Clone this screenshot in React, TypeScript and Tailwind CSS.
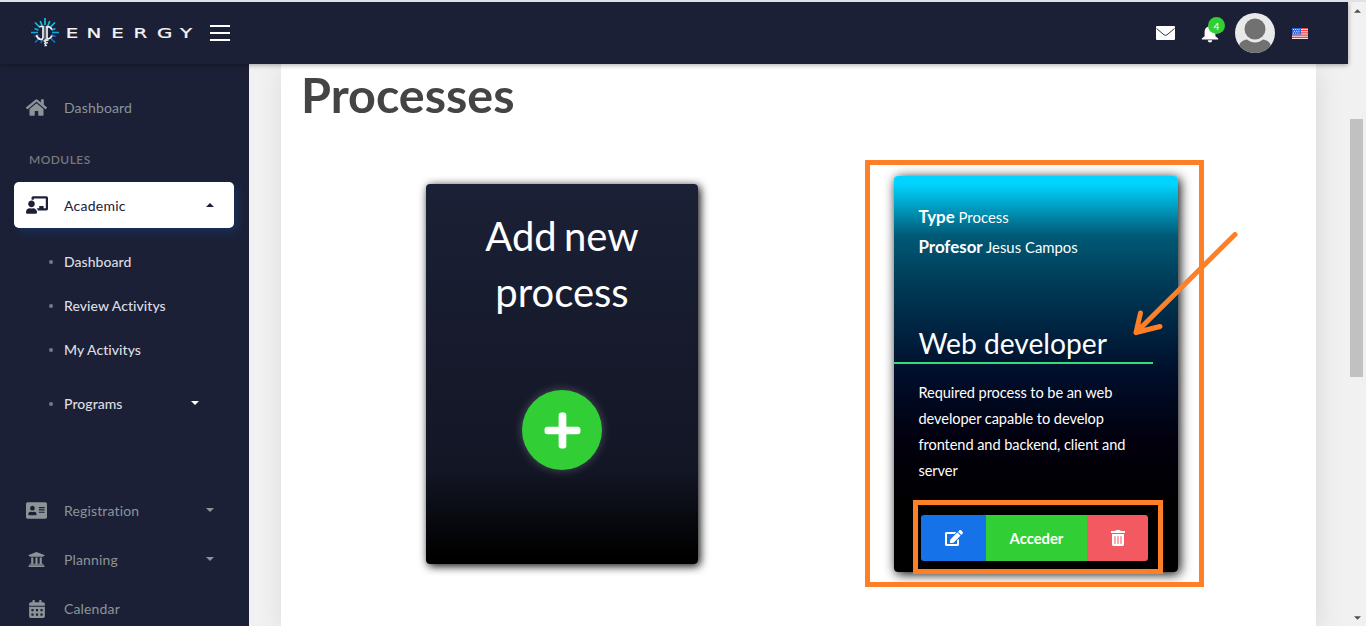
import React from "react";
import {
  FaAddressCard,
  FaCalendarAlt,
  FaChalkboardTeacher,
  FaEdit,
  FaHome,
  FaPlus,
  FaTrashAlt,
  FaUniversity,
} from "react-icons/fa";

function LogoMark() {
  return (
    <svg width="30" height="32" viewBox="0 0 30 32" fill="none">
      <g strokeWidth="1.7">
        <path d="M15 1v7M10.200 4l2 5M19.800 4l-2 5M5 5.500l5 5M25 5.500l-5 5" stroke="#12c0dc" />
        <path d="M4.500 11.500l4 1.600M25.500 11.500l-4 1.600M1 15.500h7M22 15.500h7" stroke="#14a4dc" />
        <path d="M4.500 19.500l4-1.600M25.500 19.500l-4-1.600M5 25.500l5-5M25 25.500l-5-5M11 26l1-3" stroke="#1370cf" />
      </g>
      <path d="M9.500 9.500h3.500v10.500c0 2-1 2.500-2.500 2.300-2-.3-3.500-2-4-4" stroke="#f2f2f2" strokeWidth="1.700" />
      <path d="M22 12.500c-1-2-2.500-3-5-3v12.500c2.500 0 4-1.200 5-3.500" stroke="#f2f2f2" strokeWidth="1.700" />
      <path d="M15 9v14" stroke="#8b8e9b" strokeWidth="1.200" />
      <path d="M13.500 24l5-1M14 26.500l4-.8M14.500 28.800l2.500-.5M15.500 22v7" stroke="#e6e6e6" strokeWidth="1.300" />
    </svg>
  );
}

function Header() {
  return (
    <header className="relative z-20 flex h-[62px] shrink-0 items-center bg-[#1b2036] pl-[30px] pr-[40px] shadow-[0_1px_5px_rgba(0,0,0,0.35)]">
      <LogoMark />
      <svg width="130" height="20" className="ml-1.5 overflow-visible" fill="#f4f4f4" stroke="#f4f4f4" strokeWidth="0.250" fontFamily="DejaVu Sans" fontSize="13.200">
        <text transform="scale(1.5 1)" y="15" x="-0.200 13.700 30.200 45 60.700 76">ENERGY</text>
      </svg>
      <div className="ml-[14px] flex w-5 flex-col gap-[5px]">
        <i className="h-0.5 bg-white" />
        <i className="h-0.5 bg-white" />
        <i className="h-0.5 bg-white" />
      </div>
      <div className="ml-auto flex items-center">
        <svg width="19" height="14" viewBox="0 0 19 14">
          <rect width="19" height="14" rx="1" fill="#fff" />
          <path d="M.5 2.500l7.500 6.300q1.500 1 3 0l7.500-6.300" fill="none" stroke="#1b2036" strokeWidth="0.900" />
        </svg>
        <div className="relative ml-[26px] h-[16px] w-[18px]">
          <svg width="18" height="18" viewBox="0 0 18 18" fill="#fff">
            <path d="M9 0c1 0 1.500.6 1.500 1.600 2.600.7 3.900 2.700 3.900 5.400v4.200l2.800 2.200v1H.8v-1l2.800-2.200V7c0-2.700 1.300-4.700 3.900-5.400C7.500.6 8 0 9 0zM6.800 15.300h4.400c0 1.300-.9 2.100-2.200 2.100s-2.200-.8-2.200-2.100z" />
          </svg>
          <span className="absolute left-[7px] top-[-8px] flex h-[17px] w-[17px] items-center justify-center rounded-full bg-[#31ce36] text-[10px] leading-none text-white">4</span>
        </div>
        <svg width="40" height="40" viewBox="0 0 40 40" className="ml-[16px]">
          <defs>
            <clipPath id="avatar">
              <circle cx="20" cy="20" r="20" />
            </clipPath>
          </defs>
          <g clipPath="url(#avatar)">
            <rect width="40" height="40" fill="#e9e9e9" />
            <circle cx="20" cy="16" r="10.500" fill="#717171" />
            <path d="M4 33c1-4 4-6 8-6.500 5 4 11 4 16 0 4 .5 7 2.500 8 6.500v7H4z" fill="#717171" />
          </g>
        </svg>
        <svg width="16" height="11" viewBox="0 0 16 11" className="ml-[17px]">
          <rect width="16" height="11" fill="#f8e4e4" />
          <path d="M0 .5h16M0 2.700h16M0 4.900h16M0 7.100h16M0 9.300h16" stroke="#ee3f43" strokeWidth="1.200" />
          <rect width="9" height="6.500" fill="#2d63d8" />
          <path d="M1 1.500h7M2 3.300h6M1 5.100h7" stroke="#fff" strokeWidth="1" strokeDasharray="1 1.200" />
        </svg>
      </div>
    </header>
  );
}

function Caret({ up = false, className = "" }: { up?: boolean; className?: string }) {
  return (
    <svg width="8" height="4" viewBox="0 0 8 4" fill="currentColor" className={className}>
      <path d={up ? "M0 4l4-4 4 4z" : "M0 0h8L4 4z"} />
    </svg>
  );
}

function NavItem({ icon, label, caret = false }: { icon: React.ReactNode; label: string; caret?: boolean }) {
  return (
    <div className="flex h-[49px] shrink-0 items-center text-[#8d9498]">
      <span className="ml-[26px] flex w-[21px] justify-center">{icon}</span>
      <span className="ml-[17px] text-[14px] tracking-[0.150px]">{label}</span>
      {caret && <Caret className="mb-px ml-auto mr-[35px]" />}
    </div>
  );
}

function SubItem({ label, caret = false }: { label: string; caret?: boolean }) {
  return (
    <div className="flex h-[44px] shrink-0 items-center text-[#dcdde2]">
      <i className="ml-[49px] mt-px h-1 w-1 rounded-full bg-[#777a86]" />
      <span className="ml-[11px] text-[14px] font-medium tracking-[0.050px]">{label}</span>
      {caret && <Caret className="ml-auto mr-[50px] text-white" />}
    </div>
  );
}

function Sidebar() {
  return (
    <aside className="z-10 flex w-[249px] shrink-0 flex-col overflow-hidden bg-[#1b2036] pt-[19px]">
      <NavItem icon={<FaHome size={21} />} label="Dashboard" />
      <div className="ml-[29px] mt-[20px] shrink-0 text-[12px] font-semibold leading-[16px] tracking-[0.450px] text-[#77777b]">MODULES</div>
      <div className="ml-[14px] mt-[14px] flex h-[46px] w-[220px] shrink-0 items-center rounded-[5px] bg-white text-[#1b2036] shadow-[4px_4px_10px_rgba(21,114,232,0.2)]">
        <FaChalkboardTeacher size={22} className="ml-[12px]" />
        <span className="ml-[16px] text-[14px] tracking-[0.250px]">Academic</span>
        <Caret up className="ml-auto mr-[20px]" />
      </div>
      <div className="mt-[11px] flex shrink-0 flex-col">
        <SubItem label="Dashboard" />
        <SubItem label="Review Activitys" />
        <SubItem label="My Activitys" />
      </div>
      <div className="mb-[61px] mt-[10px] shrink-0">
        <SubItem label="Programs" caret />
      </div>
      <NavItem icon={<FaAddressCard size={21} />} label="Registration" caret />
      <NavItem icon={<FaUniversity size={17} />} label="Planning" caret />
      <NavItem icon={<FaCalendarAlt size={18} />} label="Calendar" />
    </aside>
  );
}

function AddCard() {
  return (
    <section className="mt-[8px] flex h-[380px] w-[272px] shrink-0 flex-col items-center rounded-[4px] bg-[linear-gradient(180deg,#1b2036_0%,#131625_75%,#000_98%)] text-white shadow-[2px_2px_10px_#000]">
      <h2 className="mt-[24px] w-[180px] text-center text-[40px] leading-[56px] [word-spacing:-3px]">Add new process</h2>
      <button className="mt-[70px] flex h-20 w-20 items-center justify-center rounded-full bg-[#31ce36] shadow-[0_0_10px_rgba(255,255,255,0.25)]">
        <FaPlus size={41} />
      </button>
    </section>
  );
}

function ProcessCard() {
  return (
    <section className="ml-[195.500px] h-[396px] w-[284.500px] shrink-0 rounded-[4px] bg-[linear-gradient(180deg,#00d4ff_0%,#00d4ff_2%,#005a76_15%,#003b57_27%,#000e2b_50%,#02000d_67%,#000_85%)] pt-[25.500px] text-white shadow-[2px_2px_12px_#000]">
      <div className="pl-[25px] text-[14.900px] leading-[30px]">
        <p className="h-[30px]"><b className="text-[16.900px]">Type</b> Process</p>
        <p className="h-[30px]"><b className="text-[16.900px]">Profesor</b> Jesus Campos</p>
      </div>
      <h3 className="mt-[61px] h-[41px] w-[259px] border-b-2 border-[#35dc7c] pl-[25px] text-[28.200px] leading-[40px]">Web developer</h3>
      <p className="ml-[25px] mt-[16px] w-[220px] text-[14.600px] leading-[26px] tracking-[-0.080px]">
        Required process to be an web developer capable to develop frontend and backend, client and server
      </p>
      <div className="ml-[27.500px] mt-[31.500px] flex h-[46px] w-[227px] overflow-hidden rounded-[3px]">
        <button className="flex w-[65px] items-center justify-center bg-[#1572e8]"><FaEdit size={18} /></button>
        <button className="w-[101px] bg-[#31ce36] pt-px text-[14.800px] font-bold">Acceder</button>
        <button className="flex w-[61px] items-center justify-center bg-[#f25961]"><FaTrashAlt size={16} /></button>
      </div>
    </section>
  );
}

function Annotations() {
  return (
    <div className="pointer-events-none absolute inset-0 z-30">
      <div className="absolute left-[865px] top-[160px] h-[427px] w-[339px] border-[5px] border-[#ff7f27]" />
      <div className="absolute left-[913px] top-[500px] h-[74px] w-[250px] border-[5px] border-[#ff7f27]" />
      <svg className="absolute left-[1125px] top-[225px]" width="120" height="120" fill="none" stroke="#ff7f27" strokeWidth="5" strokeLinecap="round" strokeLinejoin="round">
        <path d="M110 9.500L11 107.500M15.500 88L11 107.500l24-6" />
      </svg>
    </div>
  );
}

function Scrollbar() {
  return (
    <div className="flex w-[18px] shrink-0 flex-col items-center bg-[#f1f1f1] text-[#505050]">
      <Caret up className="mt-[7px] h-[4px] w-[7px]" />
      <div className="ml-[-1px] mt-[106px] h-[258px] w-[13px] bg-[#c1c1c1]" />
      <Caret className="mb-[6px] mt-auto h-[4px] w-[7px]" />
    </div>
  );
}

export default function App() {
  return (
    <div className="relative flex h-[626px] w-[1366px] overflow-hidden border-t-2 border-[#dee1e6] bg-[#f1f1f1] font-['Lato',sans-serif]">
      <div className="flex w-[1348px] shrink-0 flex-col">
        <Header />
        <div className="flex min-h-0 flex-1">
          <Sidebar />
          <main className="flex min-w-0 flex-1 bg-[#f1f1f1] px-[32px]">
            <div className="flex w-[1035px] shrink-0 flex-col bg-white shadow-[2px_6px_25px_rgba(0,0,0,0.1)]">
              <h1 className="ml-[20px] mt-[2px] text-[48.500px] font-bold leading-[56px] text-[#444]">Processes</h1>
              <div className="ml-[145px] mt-[54px] flex items-start">
                <AddCard />
                <ProcessCard />
              </div>
            </div>
          </main>
        </div>
      </div>
      <Scrollbar />
      <div className="absolute inset-x-0 top-[-2px] h-[626px]">
        <Annotations />
      </div>
    </div>
  );
}
